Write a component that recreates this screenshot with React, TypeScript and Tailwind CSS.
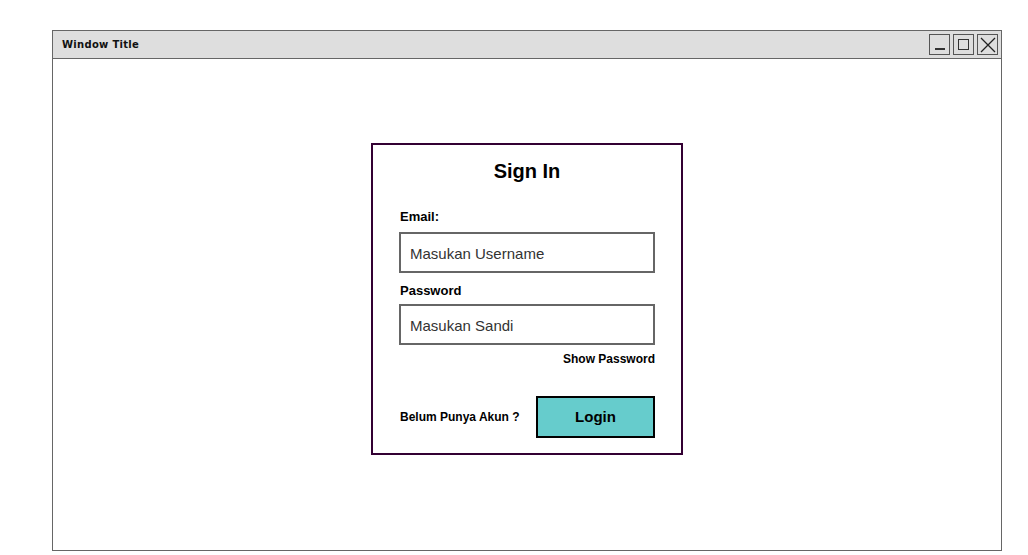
import React from 'react';

const TitleButton = ({ children }: { children: React.ReactNode }) => (
  <div className="w-[21px] h-[21px] border-[1.5px] border-[#555] bg-[#dedede] flex items-center justify-center">
    {children}
  </div>
);

const App = () => {
  return (
    <div className="w-[1028px] h-[555px] bg-white pl-[52px] pt-[30px] font-['Liberation_Sans',Arial,sans-serif] text-black">
      {/* Window */}
      <div className="w-[950px] h-[521px] border-[1.5px] border-[#666] flex flex-col">
        {/* Title bar */}
        <div className="h-[28px] shrink-0 bg-[#dedede] border-b-[1.5px] border-[#666] flex items-center justify-between pl-[9px] pr-[3px]">
          <span className="text-[10px] font-bold tracking-[0.3px] text-[#111] font-['DejaVu_Sans',sans-serif]">Window Title</span>
          <div className="flex items-center gap-[3px]">
            <TitleButton>
              <span className="block w-[10px] h-[1.5px] bg-[#333] mt-[9px]" />
            </TitleButton>
            <TitleButton>
              <span className="block w-[11px] h-[11px] border-[1.5px] border-[#333]" />
            </TitleButton>
            <TitleButton>
              <svg width="16" height="16" viewBox="0 0 16 16">
                <path d="M1 1 L15 15 M15 1 L1 15" stroke="#222" strokeWidth="1.3" />
              </svg>
            </TitleButton>
          </div>
        </div>

        {/* Content */}
        <div className="flex-1 flex justify-center pt-[84px]">
          <div className="w-[312px] h-[312px] border-2 border-[#330033] px-[26px] pt-[14px] flex flex-col">
            <h1 className="text-[20px] leading-[24px] font-bold text-center">Sign In</h1>

            <label className="mt-[26px] pl-px text-[13px] leading-[16px] font-bold">Email:</label>
            <div className="mt-[7px] h-[41px] border-2 border-[#666] flex items-center pl-[9px] pt-[3px] text-[15px] text-[#333]">
              Masukan Username
            </div>

            <label className="mt-[10px] pl-px text-[13px] leading-[16px] font-bold">Password</label>
            <div className="mt-[5px] h-[41px] border-2 border-[#666] flex items-center pl-[9px] pt-[3px] text-[15px] text-[#333]">
              Masukan Sandi
            </div>

            <div className="mt-[7px] text-right text-[12px] leading-[14px] font-bold">Show Password</div>

            <div className="mt-[30px] flex items-center justify-between">
              <span className="pl-px text-[12px] font-bold">Belum Punya Akun ?</span>
              <button className="w-[119px] h-[42px] bg-[#66cccc] border-2 border-black text-[15px] font-bold">
                Login
              </button>
            </div>
          </div>
        </div>
      </div>
    </div>
  );
};

export default App;
